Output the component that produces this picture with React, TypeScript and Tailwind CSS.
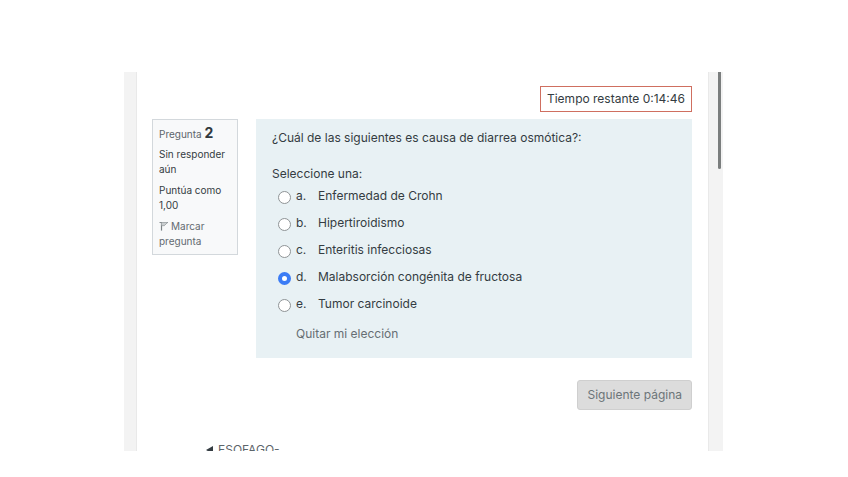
import { useState } from "react";

const ANSWERS = [
  { letter: "a.", text: "Enfermedad de Crohn" },
  { letter: "b.", text: "Hipertiroidismo" },
  { letter: "c.", text: "Enteritis infecciosas" },
  { letter: "d.", text: "Malabsorción congénita de fructosa" },
  { letter: "e.", text: "Tumor carcinoide" },
];

function FlagIcon() {
  return (
    <svg viewBox="0 0 10 10" className="mr-[2px] inline-block h-[10px] w-[10px] align-[-1px]" fill="none" stroke="#7b8185" aria-hidden="true">
      <path d="M2.5 1v8.6" strokeWidth="1.2" />
      <path d="M.5 1.5h8.2L6.6 3 5.4 4.6H2.5" strokeWidth=".9" />
      <path d="M2.5 1.5h6L6.6 3 5.4 4.6H2.5z" fill="#c9cdcf" stroke="none" />
    </svg>
  );
}

function QuestionInfo() {
  return (
    <aside className="w-[86px] shrink-0 border border-[#d3d8dc] bg-[#f8f9fa] px-[6px] pt-1 pb-[5px] text-[10px] leading-[15px] text-[#343c42]">
      <h3 className="mb-1 leading-[17px] text-[#5d656b]">
        Pregunta <span className="text-[14px] font-bold text-[#30383e]">2</span>
      </h3>
      <p className="mb-[6px]">Sin responder aún</p>
      <p className="mb-[6px]">Puntúa como 1,00</p>
      <a href="#marcar" className="block text-[#636a70]">
        <FlagIcon />
        Marcar pregunta
      </a>
    </aside>
  );
}

export default function App() {
  const [selected, setSelected] = useState<string | null>("d.");

  return (
    <div className="h-screen overflow-hidden bg-white pl-[124px] pr-[125px] pt-[72px] pb-[26px] font-['Inter','Liberation_Sans',sans-serif] text-[12px] leading-[18px] text-[#343c42]">
      <div className="relative h-full overflow-hidden bg-[#f3f3f3] pl-3 pr-[14px]">
        {/* Scrollbar */}
        <div className="absolute right-[2px] top-0 h-[97px] w-[3px] rounded-b-full bg-[#7b7e7e]" />

        <main className="h-full overflow-hidden border-x border-[#e9e9e9] bg-white pl-[15px] pr-4 pt-[14px]">
          <div className="mb-[7px] flex justify-end">
            <div role="timer" className="border border-[#cf6f60] px-[6px] py-[3px]">
              Tiempo restante 0:14:46
            </div>
          </div>

          <div className="flex items-start gap-[18px]">
            <QuestionInfo />

            <section className="flex-1 bg-[#e8f1f4] px-4 pt-[10px] pb-[15px]">
              <p className="mb-[18px]">¿Cuál de las siguientes es causa de diarrea osmótica?:</p>
              <fieldset>
                <legend className="mb-1">Seleccione una:</legend>
                <div className="flex flex-col gap-[9px] pl-[6px]">
                  {ANSWERS.map((answer) => (
                    <label key={answer.letter} className="flex items-center">
                      <input
                        type="radio"
                        name="answer"
                        checked={selected === answer.letter}
                        onChange={() => setSelected(answer.letter)}
                        className="mr-[5px] mt-[2px] h-[13px] w-[13px] appearance-none rounded-full border border-[#8f9496] bg-white checked:border-4 checked:border-[#3b7cf5]"
                      />
                      <span className="w-[22px]">{answer.letter}</span>
                      <span>{answer.text}</span>
                    </label>
                  ))}
                </div>
              </fieldset>
              <button type="button" onClick={() => setSelected(null)} className="ml-6 mt-3 block text-[#666e73]">
                Quitar mi elección
              </button>
            </section>
          </div>

          <div className="mt-[22px] flex justify-end">
            <button type="button" className="rounded-[3px] border border-[#cfcfcf] bg-[#dcdcdc] px-[9px] py-[5px] text-[#6c7579]">
              Siguiente página
            </button>
          </div>

          <nav className="mt-[31px] pl-[54px]">
            <a href="#anterior" className="flex items-center gap-[5px] whitespace-nowrap text-[#5d656b]">
              <svg viewBox="0 0 7 8" className="h-2 w-[7px]" fill="#343c42" aria-hidden="true">
                <path d="M0 4 7 0v8z" />
              </svg>
              ESOFAGO-
            </a>
          </nav>
        </main>
      </div>
    </div>
  );
}
